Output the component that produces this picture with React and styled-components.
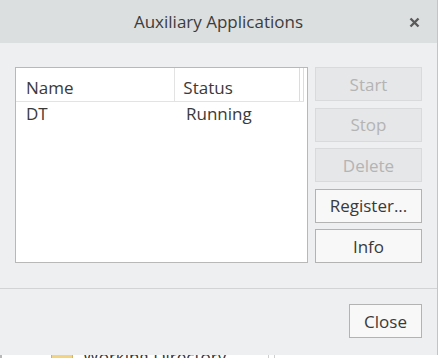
import React from 'react';
import styled, { createGlobalStyle } from 'styled-components';

const GlobalStyle = createGlobalStyle`
  html, body {
    margin: 0;
    padding: 0;
    background: #ffffff;
  }
  body {
    font-family: "Open Sans", "Noto Sans", sans-serif;
    color: #3a3a3a;
  }
`;

const Page = styled.div`
  width: 439px;
  height: 358px;
  overflow: hidden;
  display: flex;
  flex-direction: column;
`;

const Dialog = styled.div`
  width: 437px;
  height: 355px;
  flex-shrink: 0;
  background: #eeeff1;
  border-right: 1px solid #c4c4c4;
  display: flex;
  flex-direction: column;
`;

const TitleBar = styled.div`
  height: 43px;
  background: #dcdfe0;
  display: flex;
  align-items: center;
  justify-content: center;
  position: relative;
  font-size: 17px;
  color: #3c3c3c;
`;

const CloseX = styled.svg`
  position: absolute;
  right: 17px;
  top: 17px;
`;

const Body = styled.div`
  display: flex;
  padding: 24px 15px 0 15px;
  gap: 7px;
  height: 196px;
`;

const List = styled.div`
  width: 291px;
  height: 194px;
  background: #ffffff;
  border: 1px solid #b8b8b8;
  display: flex;
  flex-direction: column;
`;

const HeaderRow = styled.div`
  display: flex;
  height: 33px;
  border-bottom: 1px solid #e3e3e3;
  margin-right: 3px;
`;

const HeaderCell = styled.div`
  width: ${({ $w }) => $w}px;
  padding-left: ${({ $pl }) => $pl}px;
  box-sizing: border-box;
  border-right: 1px solid ${({ $last }) => ($last ? 'transparent' : '#e3e3e3')};
  display: flex;
  align-items: center;
  padding-top: 6px;
  font-size: 17px;
  color: #3a3a3a;
`;

const Grip = styled.div`
  width: 3px;
  border-left: 1px solid #dcdcdc;
  border-right: 1px solid #dcdcdc;
  margin-left: 1px;
`;

const Row = styled.div`
  display: flex;
  height: 22px;
  align-items: center;
  font-size: 17px;
`;

const Cell = styled.div`
  width: ${({ $w }) => $w}px;
  padding-left: ${({ $pl }) => $pl}px;
  box-sizing: border-box;
`;

const ButtonColumn = styled.div`
  display: flex;
  flex-direction: column;
  gap: 6.5px;
`;

const Button = styled.div`
  width: ${({ $w }) => $w || 107}px;
  height: 34px;
  box-sizing: border-box;
  display: flex;
  align-items: center;
  justify-content: center;
  font-size: 17px;
  background: ${({ $disabled }) => ($disabled ? '#e6e7e8' : '#f8f8f8')};
  border: 1px solid ${({ $disabled }) => ($disabled ? '#d9dadb' : '#b3b3b3')};
  color: ${({ $disabled }) => ($disabled ? '#b4b4b4' : '#3a3a3a')};
`;

const Separator = styled.div`
  margin-top: 25px;
  height: 1px;
  background: #d2d3d4;
`;

const Footer = styled.div`
  display: flex;
  justify-content: flex-end;
  padding: 15px 15px 0 0;
`;

const Behind = styled.div`
  height: 3px;
  flex-shrink: 0;
  position: relative;
  border-left: 2px solid #b8b8b8;
  display: flex;
  align-items: flex-start;
  padding-left: 49px;
  gap: 10px;
  overflow: hidden;
`;

const Folder = styled.div`
  width: 20px;
  height: 10px;
  background: #f3d37f;
  border-left: 1px solid #d9b35a;
  border-right: 1px solid #d9b35a;
`;

const BehindText = styled.div`
  font-size: 17px;
  line-height: 20px;
  color: #333;
  margin-top: -8px;
  white-space: nowrap;
`;

const BehindRule = styled.div`
  position: absolute;
  left: 266px;
  top: 0;
  bottom: 0;
  width: 5px;
  border-left: 1px solid #cfcfcf;
  border-right: 1px solid #cfcfcf;
`;

export default function App() {
  return (
    <Page>
      <GlobalStyle />
      <Dialog>
        <TitleBar>
          Auxiliary Applications
          <CloseX width="11" height="11" viewBox="0 0 11 11">
            <path d="M1.5 1.5 L9.5 9.5 M9.5 1.5 L1.5 9.5" stroke="#5a5a5a" strokeWidth="2.4" />
          </CloseX>
        </TitleBar>
        <Body>
          <List>
            <HeaderRow>
              <HeaderCell $w={161} $pl={10}>Name</HeaderCell>
              <HeaderCell $w={124} $pl={8} $last>Status</HeaderCell>
              <Grip />
            </HeaderRow>
            <Row>
              <Cell $w={161} $pl={10}>DT</Cell>
              <Cell $w={124} $pl={9}>Running</Cell>
            </Row>
          </List>
          <ButtonColumn>
            <Button $disabled>Start</Button>
            <Button $disabled>Stop</Button>
            <Button $disabled>Delete</Button>
            <Button>Register...</Button>
            <Button>Info</Button>
          </ButtonColumn>
        </Body>
        <Separator />
        <Footer>
          <Button $w={73}>Close</Button>
        </Footer>
      </Dialog>
      <Behind>
        <Folder />
        <BehindText>Working Directory</BehindText>
        <BehindRule />
      </Behind>
    </Page>
  );
}
